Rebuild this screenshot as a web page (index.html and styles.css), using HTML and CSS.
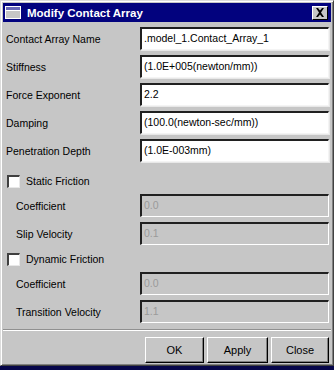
FILE: index.html
```html
<!DOCTYPE html>
<html lang="en">
<head>
    <meta charset="UTF-8">
    <title>Modify Contact Array</title>
    <link rel="stylesheet" href="styles.css">
</head>
<body>

    <!-- Dialog window -->
    <div class="window">
        <div class="titlebar">
            <svg class="title-icon" width="16" height="13" viewBox="0 0 16 13">
                <rect x="0.5" y="0.5" width="15" height="12" fill="#c6c6c6" stroke="#ffffff"/>
                <rect x="1" y="1" width="14" height="3" fill="#6a6ab8"/>
                <line x1="1" y1="4.5" x2="15" y2="4.5" stroke="#ffffff"/>
            </svg>
            <span class="title-text">Modify Contact Array</span>
            <div class="title-close">
                <svg width="10" height="9" viewBox="0 0 10 9">
                    <path d="M1 0h2l2 2.5L7 0h2L6 4.5 9 9H7L5 6.5 3 9H1l3-4.5z" fill="#000"/>
                </svg>
            </div>
        </div>

        <div class="form">
            <div class="row">
                <label class="label">Contact Array Name</label>
                <div class="field">.model_1.Contact_Array_1</div>
            </div>
            <div class="row">
                <label class="label">Stiffness</label>
                <div class="field">(1.0E+005(newton/mm))</div>
            </div>
            <div class="row">
                <label class="label">Force Exponent</label>
                <div class="field">2.2</div>
            </div>
            <div class="row">
                <label class="label">Damping</label>
                <div class="field">(100.0(newton-sec/mm))</div>
            </div>
            <div class="row">
                <label class="label">Penetration Depth</label>
                <div class="field">(1.0E-003mm)</div>
            </div>

            <!-- Static friction -->
            <div class="check-row check-first">
                <span class="checkbox"></span>
                <span class="check-label">Static Friction</span>
            </div>
            <div class="row row-after-check">
                <label class="label sub">Coefficient</label>
                <div class="field disabled">0.0</div>
            </div>
            <div class="row">
                <label class="label sub">Slip Velocity</label>
                <div class="field disabled">0.1</div>
            </div>

            <!-- Dynamic friction -->
            <div class="check-row">
                <span class="checkbox"></span>
                <span class="check-label">Dynamic Friction</span>
            </div>
            <div class="row row-after-check">
                <label class="label sub">Coefficient</label>
                <div class="field disabled">0.0</div>
            </div>
            <div class="row">
                <label class="label sub">Transition Velocity</label>
                <div class="field disabled">1.1</div>
            </div>
        </div>

        <div class="separator"></div>

        <div class="buttons">
            <button class="btn btn-ok">OK</button>
            <button class="btn btn-apply">Apply</button>
            <button class="btn btn-close">Close</button>
        </div>
    </div>

    <div class="taskbar"></div>

</body>
</html>
```

FILE: styles.css
```css
/* Basic page */
body {
    margin: 0;
    width: 334px;
    height: 370px;
    overflow: hidden;
    background-color: #c6c6c6;
    font-family: 'Liberation Sans', Arial, sans-serif;
    font-size: 10.5px;
    color: #000000;
}

/* Outer window frame */
.window {
    box-sizing: border-box;
    width: 334px;
    height: 366px;
    background-color: #c6c6c6;
    border-top: 1px solid #dcdcdc;
    border-left: 1px solid #dcdcdc;
    border-right: 1px solid #404040;
    border-bottom: 1px solid #404040;
    box-shadow: inset 1px 1px 0 #ffffff, inset -1px -1px 0 #808080;
    padding: 2px;
    display: flex;
    flex-direction: column;
}

/* Title bar */
.titlebar {
    height: 19px;
    background-color: #02027e;
    display: flex;
    align-items: center;
    padding: 0 3px 0 2px;
}

.title-icon {
    flex: none;
}

.title-text {
    color: #ffffff;
    font-weight: 700;
    font-size: 11.5px;
    margin-left: 6px;
    flex: 1;
}

.title-close {
    width: 14px;
    height: 12px;
    background-color: #c6c6c6;
    border-top: 1px solid #ffffff;
    border-left: 1px solid #ffffff;
    border-right: 1px solid #000000;
    border-bottom: 1px solid #000000;
    display: flex;
    align-items: center;
    justify-content: center;
}

/* Form area */
.form {
    display: flex;
    flex-direction: column;
    padding: 3px 0 0 3px;
}

.row {
    height: 23px;
    margin-top: 5px;
    display: flex;
    align-items: center;
}

.row:first-child {
    margin-top: 2px;
}

.row-after-check {
    margin-top: 2px;
}

.label {
    width: 134px;
    flex: none;
}

.label.sub {
    padding-left: 10px;
    width: 124px;
}

/* Sunken text field */
.field {
    box-sizing: border-box;
    width: 189px;
    height: 23px;
    background-color: #ffffff;
    border-top: 2px solid #202020;
    border-left: 2px solid #202020;
    border-right: 1px solid #f4f4f4;
    border-bottom: 1px solid #f4f4f4;
    box-shadow: 1px 1px 0 #e8e8e8;
    padding: 2px 0 0 2px;
    font-size: 10.5px;
    line-height: 15px;
    white-space: nowrap;
}

.field.disabled {
    background-color: #c6c6c6;
    color: #9a9a9a;
    border-right-color: #ffffff;
    border-bottom-color: #ffffff;
    box-shadow: none;
}

/* Checkbox rows */
.check-row {
    height: 22px;
    margin-top: 3px;
    display: flex;
    align-items: center;
}

.check-first {
    margin-top: 8px;
}

.checkbox {
    box-sizing: border-box;
    width: 13px;
    height: 13px;
    margin-left: 1px;
    background-color: #ffffff;
    border-top: 2px solid #404040;
    border-left: 2px solid #404040;
    border-right: 1px solid #e8e8e8;
    border-bottom: 1px solid #e8e8e8;
}

.check-label {
    margin-left: 6px;
}

/* Separator groove */
.separator {
    margin-top: 6px;
    height: 0;
    border-top: 1px solid #909090;
    border-bottom: 1px solid #ffffff;
}

/* Buttons */
.buttons {
    display: flex;
    justify-content: flex-end;
    gap: 3px;
    padding: 6px 2px 0 0;
}

.btn {
    box-sizing: border-box;
    height: 26px;
    background-color: #c6c6c6;
    font-family: 'Liberation Sans', Arial, sans-serif;
    font-size: 11px;
    color: #000000;
    border-top: 1px solid #ffffff;
    border-left: 1px solid #ffffff;
    border-right: 1px solid #000000;
    border-bottom: 1px solid #000000;
    box-shadow: inset -1px -1px 0 #808080;
    padding: 0;
}

.btn-ok {
    width: 59px;
}

.btn-apply {
    width: 61px;
}

.btn-close {
    width: 58px;
}

/* Dark strip below the window */
.taskbar {
    height: 4px;
    background-color: #06064a;
}
```
